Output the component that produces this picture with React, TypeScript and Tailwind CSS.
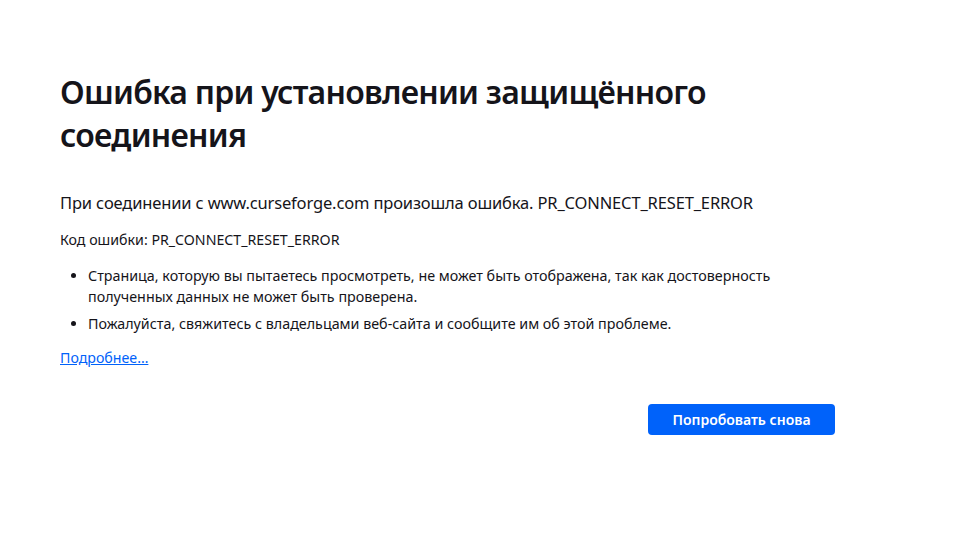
export default function App() {
  return (
    <div className="min-h-[552px] w-full bg-white text-[#15141a]" style={{ fontFamily: '"Noto Sans", "Open Sans", sans-serif' }}>
      <div className="w-[775px] ml-[60px] pt-[70px]">
        <h1 className="text-[32px] leading-[43px] font-semibold tracking-[-0.75px]">
          Ошибка при установлении защищённого соединения
        </h1>
        <p className="mt-[35px] text-[16.5px] leading-[24px] tracking-[-0.15px]">
          При соединении с www.curseforge.com произошла ошибка. PR_CONNECT_RESET_ERROR
        </p>
        <p className="mt-[15px] text-[14.2px] leading-[20px]">Код ошибки: PR_CONNECT_RESET_ERROR</p>
        <ul className="mt-[15px] list-disc pl-[28px] text-[14.3px] leading-[21px]">
          <li className="mb-[6px]">
            Страница, которую вы пытаетесь просмотреть, не может быть отображена, так как достоверность полученных данных не может быть проверена.
          </li>
          <li>Пожалуйста, свяжитесь с владельцами веб-сайта и сообщите им об этой проблеме.</li>
        </ul>
        <a href="#" className="mt-[14px] inline-block text-[14.2px] leading-[20px] text-[#0062fa] underline">
          Подробнее…
        </a>
        <div className="mt-[35px] flex justify-end">
          <button className="h-[31px] w-[187px] rounded-[4px] bg-[#0062fa] text-[14px] font-semibold text-white">
            Попробовать снова
          </button>
        </div>
      </div>
    </div>
  )
}
